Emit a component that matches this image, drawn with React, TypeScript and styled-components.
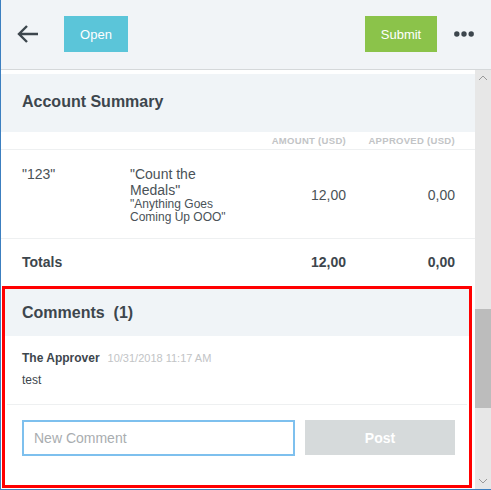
import styled, { createGlobalStyle } from 'styled-components';

const GlobalStyle = createGlobalStyle`
  * {
    box-sizing: border-box;
  }
  body {
    margin: 0;
    background: #ffffff;
    font-family: 'Liberation Sans', Arial, sans-serif;
  }
`;

const summaryRows = [
  {
    account: '"123"',
    title: '"Count the Medals"',
    sub: '"Anything Goes Coming Up OOO"',
    amount: '12,00',
    approved: '0,00',
  },
];

const comments = [{ author: 'The Approver', date: '10/31/2018 11:17 AM', text: 'test' }];

export default function App() {
  return (
    <>
      <GlobalStyle />
      <Page>
        <Header>
          <BackIcon width="22" height="18" viewBox="0 0 22 18">
            <path d="M2 9 H21 M10 1 L2 9 L10 17" fill="none" stroke="#3d464d" strokeWidth="2.4" />
          </BackIcon>
          <ActionButton color="#5bc5d9" style={{ width: 64 }}>
            Open
          </ActionButton>
          <Spacer />
          <ActionButton color="#8bc34a" style={{ width: 72 }}>
            Submit
          </ActionButton>
          <MoreIcon width="20" height="8" viewBox="0 0 20 8">
            <circle cx="2.8" cy="4" r="2.7" fill="#3d464d" />
            <circle cx="10" cy="4" r="2.7" fill="#3d464d" />
            <circle cx="17.2" cy="4" r="2.7" fill="#3d464d" />
          </MoreIcon>
        </Header>

        <Body>
          <Content>
            <SectionTitle>Account Summary</SectionTitle>
            <HeadRow>
              <span />
              <span />
              <ColHead>AMOUNT (USD)</ColHead>
              <ColHead>APPROVED (USD)</ColHead>
            </HeadRow>
            {summaryRows.map((r) => (
              <DataRow key={r.account}>
                <Cell>{r.account}</Cell>
                <Cell>
                  {r.title}
                  <SubText>{r.sub}</SubText>
                </Cell>
                <Amount>{r.amount}</Amount>
                <Amount>{r.approved}</Amount>
              </DataRow>
            ))}
            <TotalsRow>
              <span>Totals</span>
              <span />
              <Amount>12,00</Amount>
              <Amount>0,00</Amount>
            </TotalsRow>

            <CommentsBox>
              <CommentsTitle>
                Comments&nbsp;&nbsp;(1)
              </CommentsTitle>
              {comments.map((c) => (
                <Comment key={c.date}>
                  <Meta>
                    <Author>{c.author}</Author>
                    <Stamp>{c.date}</Stamp>
                  </Meta>
                  <CommentText>{c.text}</CommentText>
                </Comment>
              ))}
              <Form>
                <CommentInput placeholder="New Comment" autoFocus />
                <PostButton>Post</PostButton>
              </Form>
            </CommentsBox>
          </Content>

          <Scrollbar>
            <ScrollArrow width="16" height="16" viewBox="0 0 16 16">
              <path d="M4 10 L8 6 L12 10" fill="none" stroke="#9a9a9a" strokeWidth="1" />
            </ScrollArrow>
            <Track>
              <Thumb />
            </Track>
            <ScrollArrow width="16" height="16" viewBox="0 0 16 16">
              <path d="M4 6 L8 10 L12 6" fill="none" stroke="#9a9a9a" strokeWidth="1" />
            </ScrollArrow>
          </Scrollbar>
        </Body>
      </Page>
    </>
  );
}

const Page = styled.div`
  width: 491px;
  height: 490px;
  display: flex;
  flex-direction: column;
  border-left: 1px solid #3c7fc0;
  border-bottom: 1px solid #3c7fc0;
  overflow: hidden;
`;

const Header = styled.header`
  height: 70px;
  flex-shrink: 0;
  display: flex;
  align-items: center;
  padding: 0 17px 0 16px;
  background: #f1f4f7;
  border-bottom: 1px solid #d5d8da;
`;

const BackIcon = styled.svg`
  margin-right: 25px;
  margin-top: -1px;
`;

const ActionButton = styled.button<{ color: string }>`
  height: 36px;
  margin-top: -1px;
  border: none;
  background: ${(p) => p.color};
  color: #ffffff;
  font-family: 'Liberation Sans', Arial, sans-serif;
  font-size: 13px;
  padding: 0;
`;

const Spacer = styled.div`
  flex: 1;
`;

const MoreIcon = styled.svg`
  margin-left: 17px;
  margin-top: -1px;
`;

const Body = styled.div`
  flex: 1;
  display: flex;
  min-height: 0;
`;

const Content = styled.main`
  flex: 1;
  padding-top: 4px;
  overflow: hidden;
`;

const SectionTitle = styled.h2`
  margin: 0;
  height: 58px;
  display: flex;
  align-items: center;
  padding: 0 21px 2px;
  background: #f0f4f7;
  color: #3d464d;
  font-size: 16px;
  font-weight: 700;
`;

const gridCols = `
  display: grid;
  grid-template-columns: 108px 100px 1fr 109px;
  padding: 0 20px 0 21px;
  border-bottom: 1px solid #eef0f1;
`;

const HeadRow = styled.div`
  ${gridCols};
  height: 18px;
  align-items: center;
`;

const ColHead = styled.span`
  text-align: right;
  font-size: 9.5px;
  font-weight: 700;
  letter-spacing: 0.3px;
  color: #c2c4c6;
`;

const DataRow = styled.div`
  ${gridCols};
  padding-top: 16px;
  padding-bottom: 14px;
  align-items: start;
  color: #4a5257;
  font-size: 14px;
  line-height: 16px;
`;

const Cell = styled.div``;

const SubText = styled.div`
  font-size: 12px;
  line-height: 13px;
`;

const Amount = styled.span`
  text-align: right;
  align-self: center;
`;

const TotalsRow = styled.div`
  ${gridCols};
  height: 47px;
  padding-bottom: 2px;
  align-items: center;
  border-bottom: none;
  color: #3d464d;
  font-size: 14px;
  font-weight: 700;
`;

const CommentsBox = styled.section`
  margin: 0 3px 1px 1px;
  border: 3px solid #ff0000;
  height: 202px;
`;

const CommentsTitle = styled.h3`
  margin: 0;
  height: 47px;
  display: flex;
  align-items: center;
  padding: 0 17px;
  background: #f0f4f7;
  color: #3d464d;
  font-size: 16px;
  font-weight: 700;
`;

const Comment = styled.div`
  margin: 0 2px;
  padding: 14px 15px 16px;
  border-bottom: 1px solid #eef0f1;
`;

const Meta = styled.div`
  display: flex;
  align-items: baseline;
  gap: 8px;
  line-height: 16px;
`;

const Author = styled.span`
  font-size: 12px;
  font-weight: 700;
  color: #3d464d;
`;

const Stamp = styled.span`
  font-size: 11px;
  color: #c2c4c6;
`;

const CommentText = styled.div`
  margin-top: 6px;
  font-size: 12px;
  line-height: 16px;
  color: #3d464d;
`;

const Form = styled.div`
  display: flex;
  gap: 10px;
  padding: 15px 14px 0 17px;
`;

const CommentInput = styled.input`
  width: 273px;
  height: 36px;
  border: 2px solid #7ec0ee;
  outline: none;
  padding: 0 10px;
  font-family: 'Liberation Sans', Arial, sans-serif;
  font-size: 14px;
  color: #3d464d;
  caret-color: #000000;
  &::placeholder {
    color: #a9adb0;
  }
`;

const PostButton = styled.button`
  flex: 1;
  height: 35px;
  border: none;
  background: #d6dadb;
  color: #ffffff;
  font-family: 'Liberation Sans', Arial, sans-serif;
  font-size: 14px;
  font-weight: 700;
`;

const Scrollbar = styled.div`
  width: 16px;
  flex-shrink: 0;
  display: flex;
  flex-direction: column;
  background: #e7e7e7;
`;

const ScrollArrow = styled.svg`
  flex-shrink: 0;
`;

const Track = styled.div`
  flex: 1;
  padding-top: 223px;
`;

const Thumb = styled.div`
  height: 99px;
  background: #bcbcbc;
`;
